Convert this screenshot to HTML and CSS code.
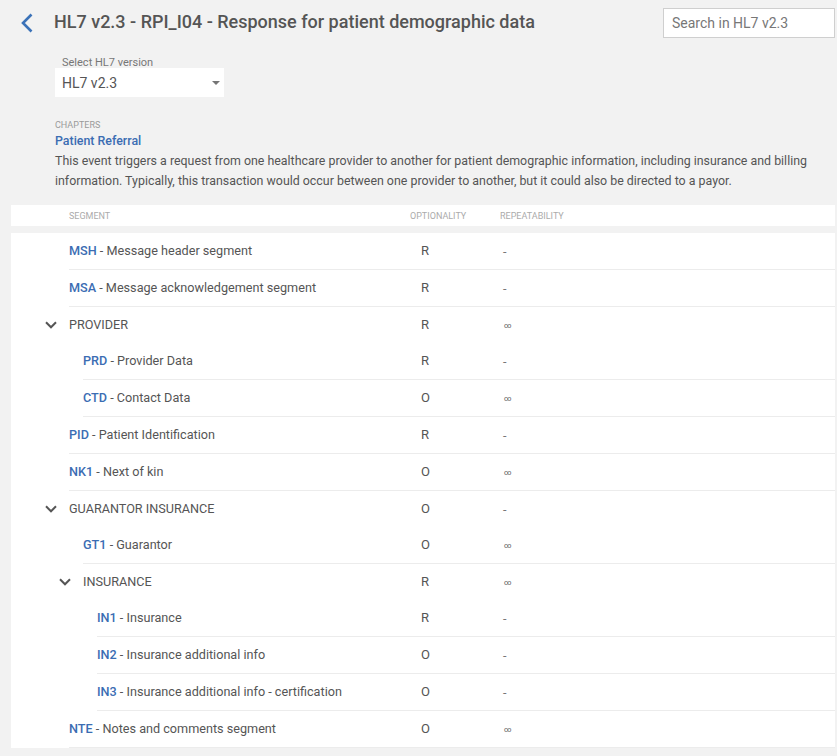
FILE: index.html
```html
<!DOCTYPE html>
<html lang="en">
<head>
<meta charset="utf-8">
<title>HL7 v2.3 - RPI_I04</title>
<link rel="stylesheet" href="styles.css">
</head>
<body>
<div class="page">
  <header class="topbar">
    <a class="back" href="#" aria-label="Back">
      <svg width="12" height="20" viewBox="0 0 12 20"><path d="M10.5 1.5 L2 10 L10.5 18.5" fill="none" stroke="#3b72b8" stroke-width="2.6" stroke-linecap="butt" stroke-linejoin="miter"/></svg>
    </a>
    <h1 class="title">HL7 v2.3 - RPI_I04 - Response for patient demographic data</h1>
    <div class="search">Search in HL7 v2.3</div>
  </header>

  <div class="version">
    <div class="version-label">Select HL7 version</div>
    <div class="select"><span>HL7 v2.3</span><span class="caret"></span></div>
  </div>

  <section class="chapter">
    <div class="chapter-label">CHAPTERS</div>
    <div class="chapter-title">Patient Referral</div>
    <p class="chapter-desc">This event triggers a request from one healthcare provider to another for patient demographic information, including insurance and billing information. Typically, this transaction would occur between one provider to another, but it could also be directed to a payor.</p>
  </section>

  <div class="thead">
    <span class="th-seg">Segment</span>
    <span class="th-opt">Optionality</span>
    <span class="th-rep">Repeatability</span>
  </div>

  <div class="tbody">
    <div class="row lvl0"><span class="seg"><b class="code">MSH</b>&nbsp;- Message header segment</span><span class="opt">R</span><span class="rep">-</span></div>
    <div class="row lvl0"><span class="seg"><b class="code">MSA</b>&nbsp;- Message acknowledgement segment</span><span class="opt">R</span><span class="rep">-</span></div>
    <div class="row group lvl0"><span class="seg"><span class="toggle"><svg width="12" height="8" viewBox="0 0 12 8"><path d="M1 1.3 L6 6.3 L11 1.3" fill="none" stroke="#555" stroke-width="2"/></svg></span>PROVIDER</span><span class="opt">R</span><span class="rep inf">∞</span></div>
    <div class="row lvl1"><span class="seg"><b class="code">PRD</b>&nbsp;- Provider Data</span><span class="opt">R</span><span class="rep">-</span></div>
    <div class="row lvl1"><span class="seg"><b class="code">CTD</b>&nbsp;- Contact Data</span><span class="opt">O</span><span class="rep inf">∞</span></div>
    <div class="row lvl0"><span class="seg"><b class="code">PID</b>&nbsp;- Patient Identification</span><span class="opt">R</span><span class="rep">-</span></div>
    <div class="row lvl0"><span class="seg"><b class="code">NK1</b>&nbsp;- Next of kin</span><span class="opt">O</span><span class="rep inf">∞</span></div>
    <div class="row group lvl0"><span class="seg"><span class="toggle"><svg width="12" height="8" viewBox="0 0 12 8"><path d="M1 1.3 L6 6.3 L11 1.3" fill="none" stroke="#555" stroke-width="2"/></svg></span>GUARANTOR INSURANCE</span><span class="opt">O</span><span class="rep">-</span></div>
    <div class="row lvl1"><span class="seg"><b class="code">GT1</b>&nbsp;- Guarantor</span><span class="opt">O</span><span class="rep inf">∞</span></div>
    <div class="row group lvl1"><span class="seg"><span class="toggle"><svg width="12" height="8" viewBox="0 0 12 8"><path d="M1 1.3 L6 6.3 L11 1.3" fill="none" stroke="#555" stroke-width="2"/></svg></span>INSURANCE</span><span class="opt">R</span><span class="rep inf">∞</span></div>
    <div class="row lvl2"><span class="seg"><b class="code">IN1</b>&nbsp;- Insurance</span><span class="opt">R</span><span class="rep">-</span></div>
    <div class="row lvl2"><span class="seg"><b class="code">IN2</b>&nbsp;- Insurance additional info</span><span class="opt">O</span><span class="rep">-</span></div>
    <div class="row lvl2"><span class="seg"><b class="code">IN3</b>&nbsp;- Insurance additional info - certification</span><span class="opt">O</span><span class="rep">-</span></div>
    <div class="row lvl0"><span class="seg"><b class="code">NTE</b>&nbsp;- Notes and comments segment</span><span class="opt">O</span><span class="rep inf">∞</span></div>
  </div>
</div>
</body>
</html>
```

FILE: styles.css
```css
* { box-sizing: border-box; }

html, body {
  margin: 0;
  padding: 0;
  background: #f2f2f2;
}

body {
  font-family: Roboto, "Noto Sans", "Liberation Sans", sans-serif;
  color: #555;
}

.page {
  width: 837px;
  min-height: 756px;
}

/* ---------- top bar ---------- */
.topbar {
  display: flex;
  align-items: center;
  height: 30px;
  margin-top: 8px;
  padding: 0 2px 0 21px;
}

.back {
  display: flex;
  width: 12px;
  height: 20px;
  margin-right: 21px;
  margin-top: -1px;
}

.title {
  flex: 1;
  margin: 0;
  font-size: 18px;
  font-weight: 500;
  color: #555;
  line-height: 24px;
  margin-top: -2px;
}

.search {
  width: 172px;
  height: 30px;
  background: #fff;
  border: 1px solid #cfcfcf;
  padding-left: 8px;
  font-size: 14px;
  line-height: 28px;
  color: #777;
}

/* ---------- version select ---------- */
.version {
  margin-top: 18px;
  padding-left: 55px;
}

.version-label {
  padding-left: 7px;
  font-size: 11px;
  line-height: 12px;
  padding-top: 1px;
  margin-bottom: -1px;
  color: #777;
}

.select {
  display: flex;
  align-items: center;
  justify-content: space-between;
  width: 169px;
  height: 29px;
  background: #fff;
  padding: 0 4px 0 7px;
  font-size: 14px;
  color: #555;
}

.caret {
  width: 0;
  height: 0;
  border-left: 4px solid transparent;
  border-right: 4px solid transparent;
  border-top: 4px solid #757575;
  margin-top: 1px;
}

/* ---------- chapter ---------- */
.chapter {
  margin-top: 22px;
  padding: 0 2px 0 55px;
}

.chapter-label {
  font-size: 9px;
  line-height: 12px;
  color: #9a9a9a;
}

.chapter-title {
  font-size: 12.4px;
  font-weight: 500;
  line-height: 20px;
  color: #3b6db3;
}

.chapter-desc {
  margin: 0;
  font-size: 12.4px;
  line-height: 20px;
  color: #555;
}

/* ---------- table ---------- */
.thead {
  display: flex;
  align-items: center;
  height: 21px;
  margin: 14px 2px 0 11px;
  background: #fff;
  font-size: 9px;
  text-transform: uppercase;
  color: #ababab;
}

.th-seg { width: 399px; padding-left: 58px; }
.th-opt { width: 90px; }
.th-rep { flex: 1; }

.tbody {
  margin: 7px 2px 0 11px;
  background: #fff;
}

.row {
  display: flex;
  align-items: center;
  height: 36px;
  box-sizing: content-box;
  border-bottom: 1px solid #ececec;
  font-size: 12.65px;
  color: #555;
}

.row.group { border-bottom: none; }

.lvl0 { margin-left: 58px; }
.lvl1 { margin-left: 72px; }
.lvl2 { margin-left: 86px; }

.seg {
  display: flex;
  align-items: center;
  white-space: nowrap;
  padding-bottom: 1px;
}

.lvl0 .seg { width: 341px; }
.lvl1 .seg { width: 327px; }
.lvl2 .seg { width: 313px; }

.toggle {
  display: flex;
  align-items: center;
  width: 24px;
  margin-left: -24px;
}

.code {
  font-weight: 500;
  color: #3b6db3;
}

.opt {
  width: 90px;
  padding-left: 11px;
  padding-bottom: 1px;
  font-size: 13px;
  color: #555;
}

.rep {
  flex: 1;
  padding-left: 3px;
  color: #777;
}

.rep.inf {
  font-size: 7.5px;
  color: #666;
  padding-left: 4px;
}
```
